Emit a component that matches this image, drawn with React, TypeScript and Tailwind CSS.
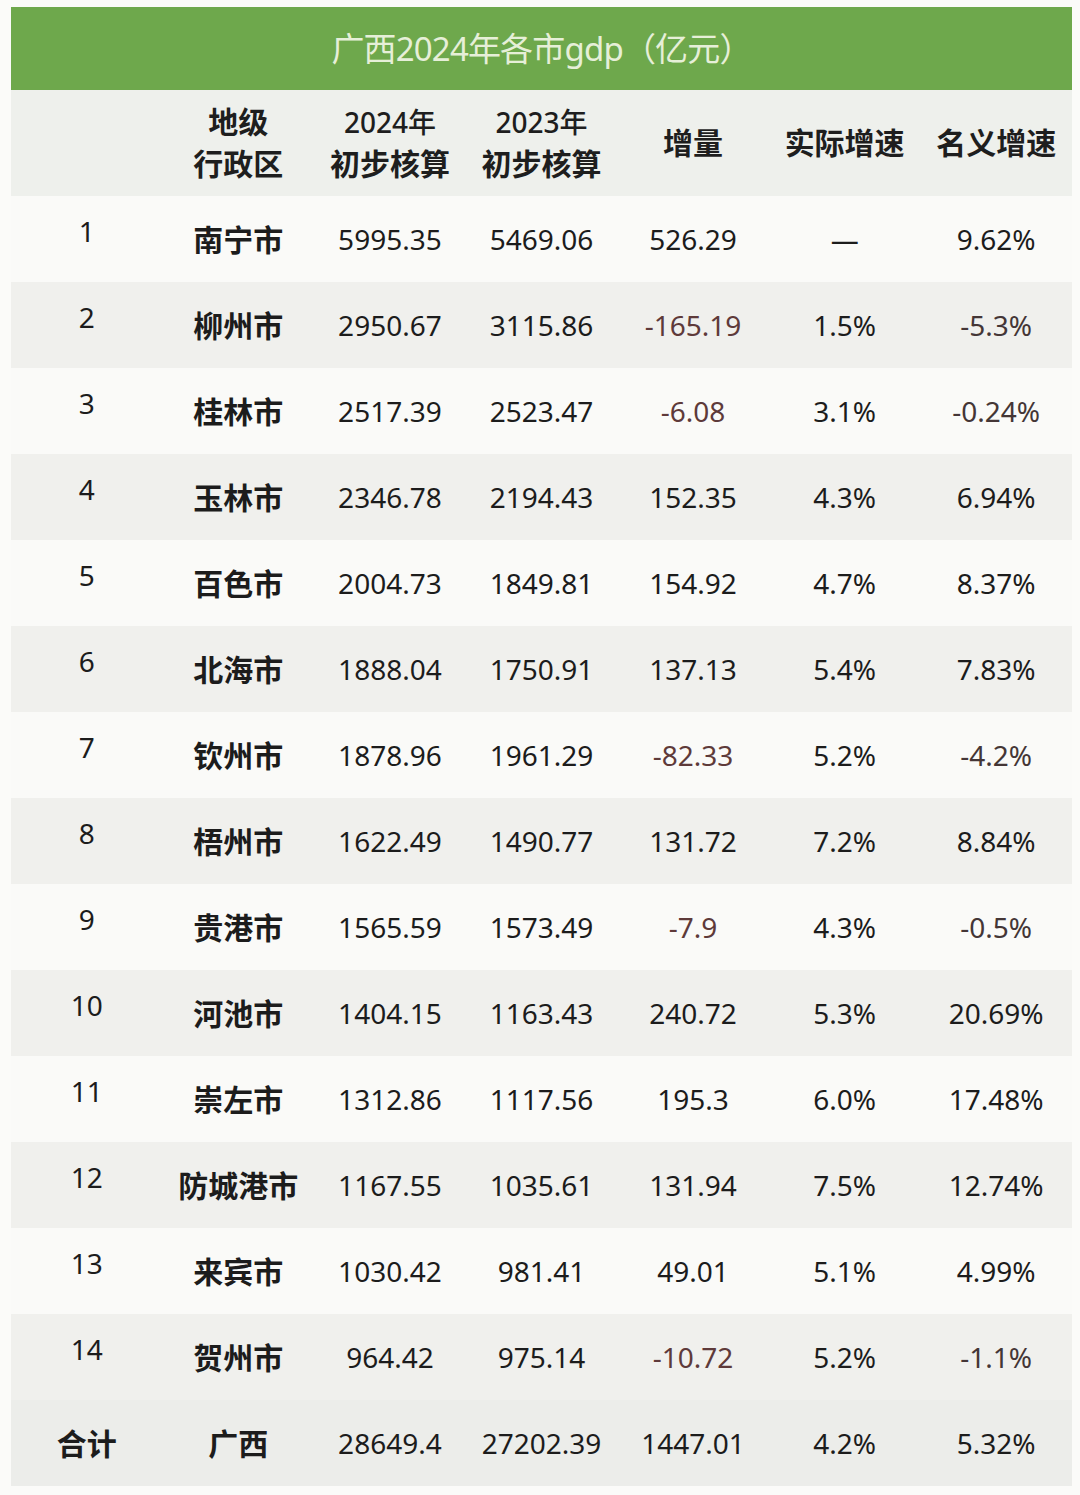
import React from "react";

type Row = {
  idx: string;
  city: string;
  y2024: string;
  y2023: string;
  delta: string;
  real: string;
  nominal: string;
};

const rows: Row[] = [
  { idx: "1", city: "南宁市", y2024: "5995.35", y2023: "5469.06", delta: "526.29", real: "—", nominal: "9.62%" },
  { idx: "2", city: "柳州市", y2024: "2950.67", y2023: "3115.86", delta: "-165.19", real: "1.5%", nominal: "-5.3%" },
  { idx: "3", city: "桂林市", y2024: "2517.39", y2023: "2523.47", delta: "-6.08", real: "3.1%", nominal: "-0.24%" },
  { idx: "4", city: "玉林市", y2024: "2346.78", y2023: "2194.43", delta: "152.35", real: "4.3%", nominal: "6.94%" },
  { idx: "5", city: "百色市", y2024: "2004.73", y2023: "1849.81", delta: "154.92", real: "4.7%", nominal: "8.37%" },
  { idx: "6", city: "北海市", y2024: "1888.04", y2023: "1750.91", delta: "137.13", real: "5.4%", nominal: "7.83%" },
  { idx: "7", city: "钦州市", y2024: "1878.96", y2023: "1961.29", delta: "-82.33", real: "5.2%", nominal: "-4.2%" },
  { idx: "8", city: "梧州市", y2024: "1622.49", y2023: "1490.77", delta: "131.72", real: "7.2%", nominal: "8.84%" },
  { idx: "9", city: "贵港市", y2024: "1565.59", y2023: "1573.49", delta: "-7.9", real: "4.3%", nominal: "-0.5%" },
  { idx: "10", city: "河池市", y2024: "1404.15", y2023: "1163.43", delta: "240.72", real: "5.3%", nominal: "20.69%" },
  { idx: "11", city: "崇左市", y2024: "1312.86", y2023: "1117.56", delta: "195.3", real: "6.0%", nominal: "17.48%" },
  { idx: "12", city: "防城港市", y2024: "1167.55", y2023: "1035.61", delta: "131.94", real: "7.5%", nominal: "12.74%" },
  { idx: "13", city: "来宾市", y2024: "1030.42", y2023: "981.41", delta: "49.01", real: "5.1%", nominal: "4.99%" },
  { idx: "14", city: "贺州市", y2024: "964.42", y2023: "975.14", delta: "-10.72", real: "5.2%", nominal: "-1.1%" },
];

const font = { fontFamily: '"Noto Sans", "Noto Sans CJK SC", sans-serif' };

function Cell({ children, className = "" }: { children: React.ReactNode; className?: string }) {
  return <div className={`flex items-center justify-center ${className}`}>{children}</div>;
}

export default function App() {
  return (
    <div className="w-[1080px] h-[1495px] bg-[#fbfbf9] pt-[7px] pl-[11px] pr-[8px]" style={font}>
      {/* title bar */}
      <div className="h-[83px] bg-[#6ea84c] flex items-center justify-center">
        <span className="text-[33px] text-[#e6efd8] tracking-tight">广西2024年各市gdp（亿元）</span>
      </div>

      {/* header */}
      <div className="grid grid-cols-7 h-[106px] bg-[#eef0ec] text-[30px] font-bold text-[#1e1e1e] leading-[42px] text-center">
        <Cell>{""}</Cell>
        <Cell className="flex-col">
          <span>地级</span>
          <span>行政区</span>
        </Cell>
        <Cell className="flex-col">
          <span className="text-[28px] font-medium">2024年</span>
          <span>初步核算</span>
        </Cell>
        <Cell className="flex-col">
          <span className="text-[28px] font-medium">2023年</span>
          <span>初步核算</span>
        </Cell>
        <Cell>增量</Cell>
        <Cell>实际增速</Cell>
        <Cell>名义增速</Cell>
      </div>

      {/* body */}
      {rows.map((r, i) => (
        <div
          key={r.idx}
          className={`grid grid-cols-7 h-[86px] text-[28px] text-[#1c1c1c] ${i % 2 === 0 ? "bg-[#fafaf8]" : "bg-[#f0f0ed]"}`}
        >
          <div className="flex justify-center pt-[20px] leading-[30px]">{r.idx}</div>
          <Cell className="font-bold text-[30px]">{r.city}</Cell>
          <Cell>{r.y2024}</Cell>
          <Cell>{r.y2023}</Cell>
          <Cell className={r.delta.startsWith("-") ? "text-[#5e3a3a]" : ""}>{r.delta}</Cell>
          <Cell>{r.real}</Cell>
          <Cell className={r.nominal.startsWith("-") ? "text-[#443636]" : ""}>{r.nominal}</Cell>
        </div>
      ))}

      {/* total */}
      <div className="grid grid-cols-7 h-[86px] text-[28px] text-[#1c1c1c] bg-[#ecedea]">
        <Cell className="font-bold text-[30px]">合计</Cell>
        <Cell className="font-bold text-[30px]">广西</Cell>
        <Cell>28649.4</Cell>
        <Cell>27202.39</Cell>
        <Cell>1447.01</Cell>
        <Cell>4.2%</Cell>
        <Cell>5.32%</Cell>
      </div>
    </div>
  );
}
